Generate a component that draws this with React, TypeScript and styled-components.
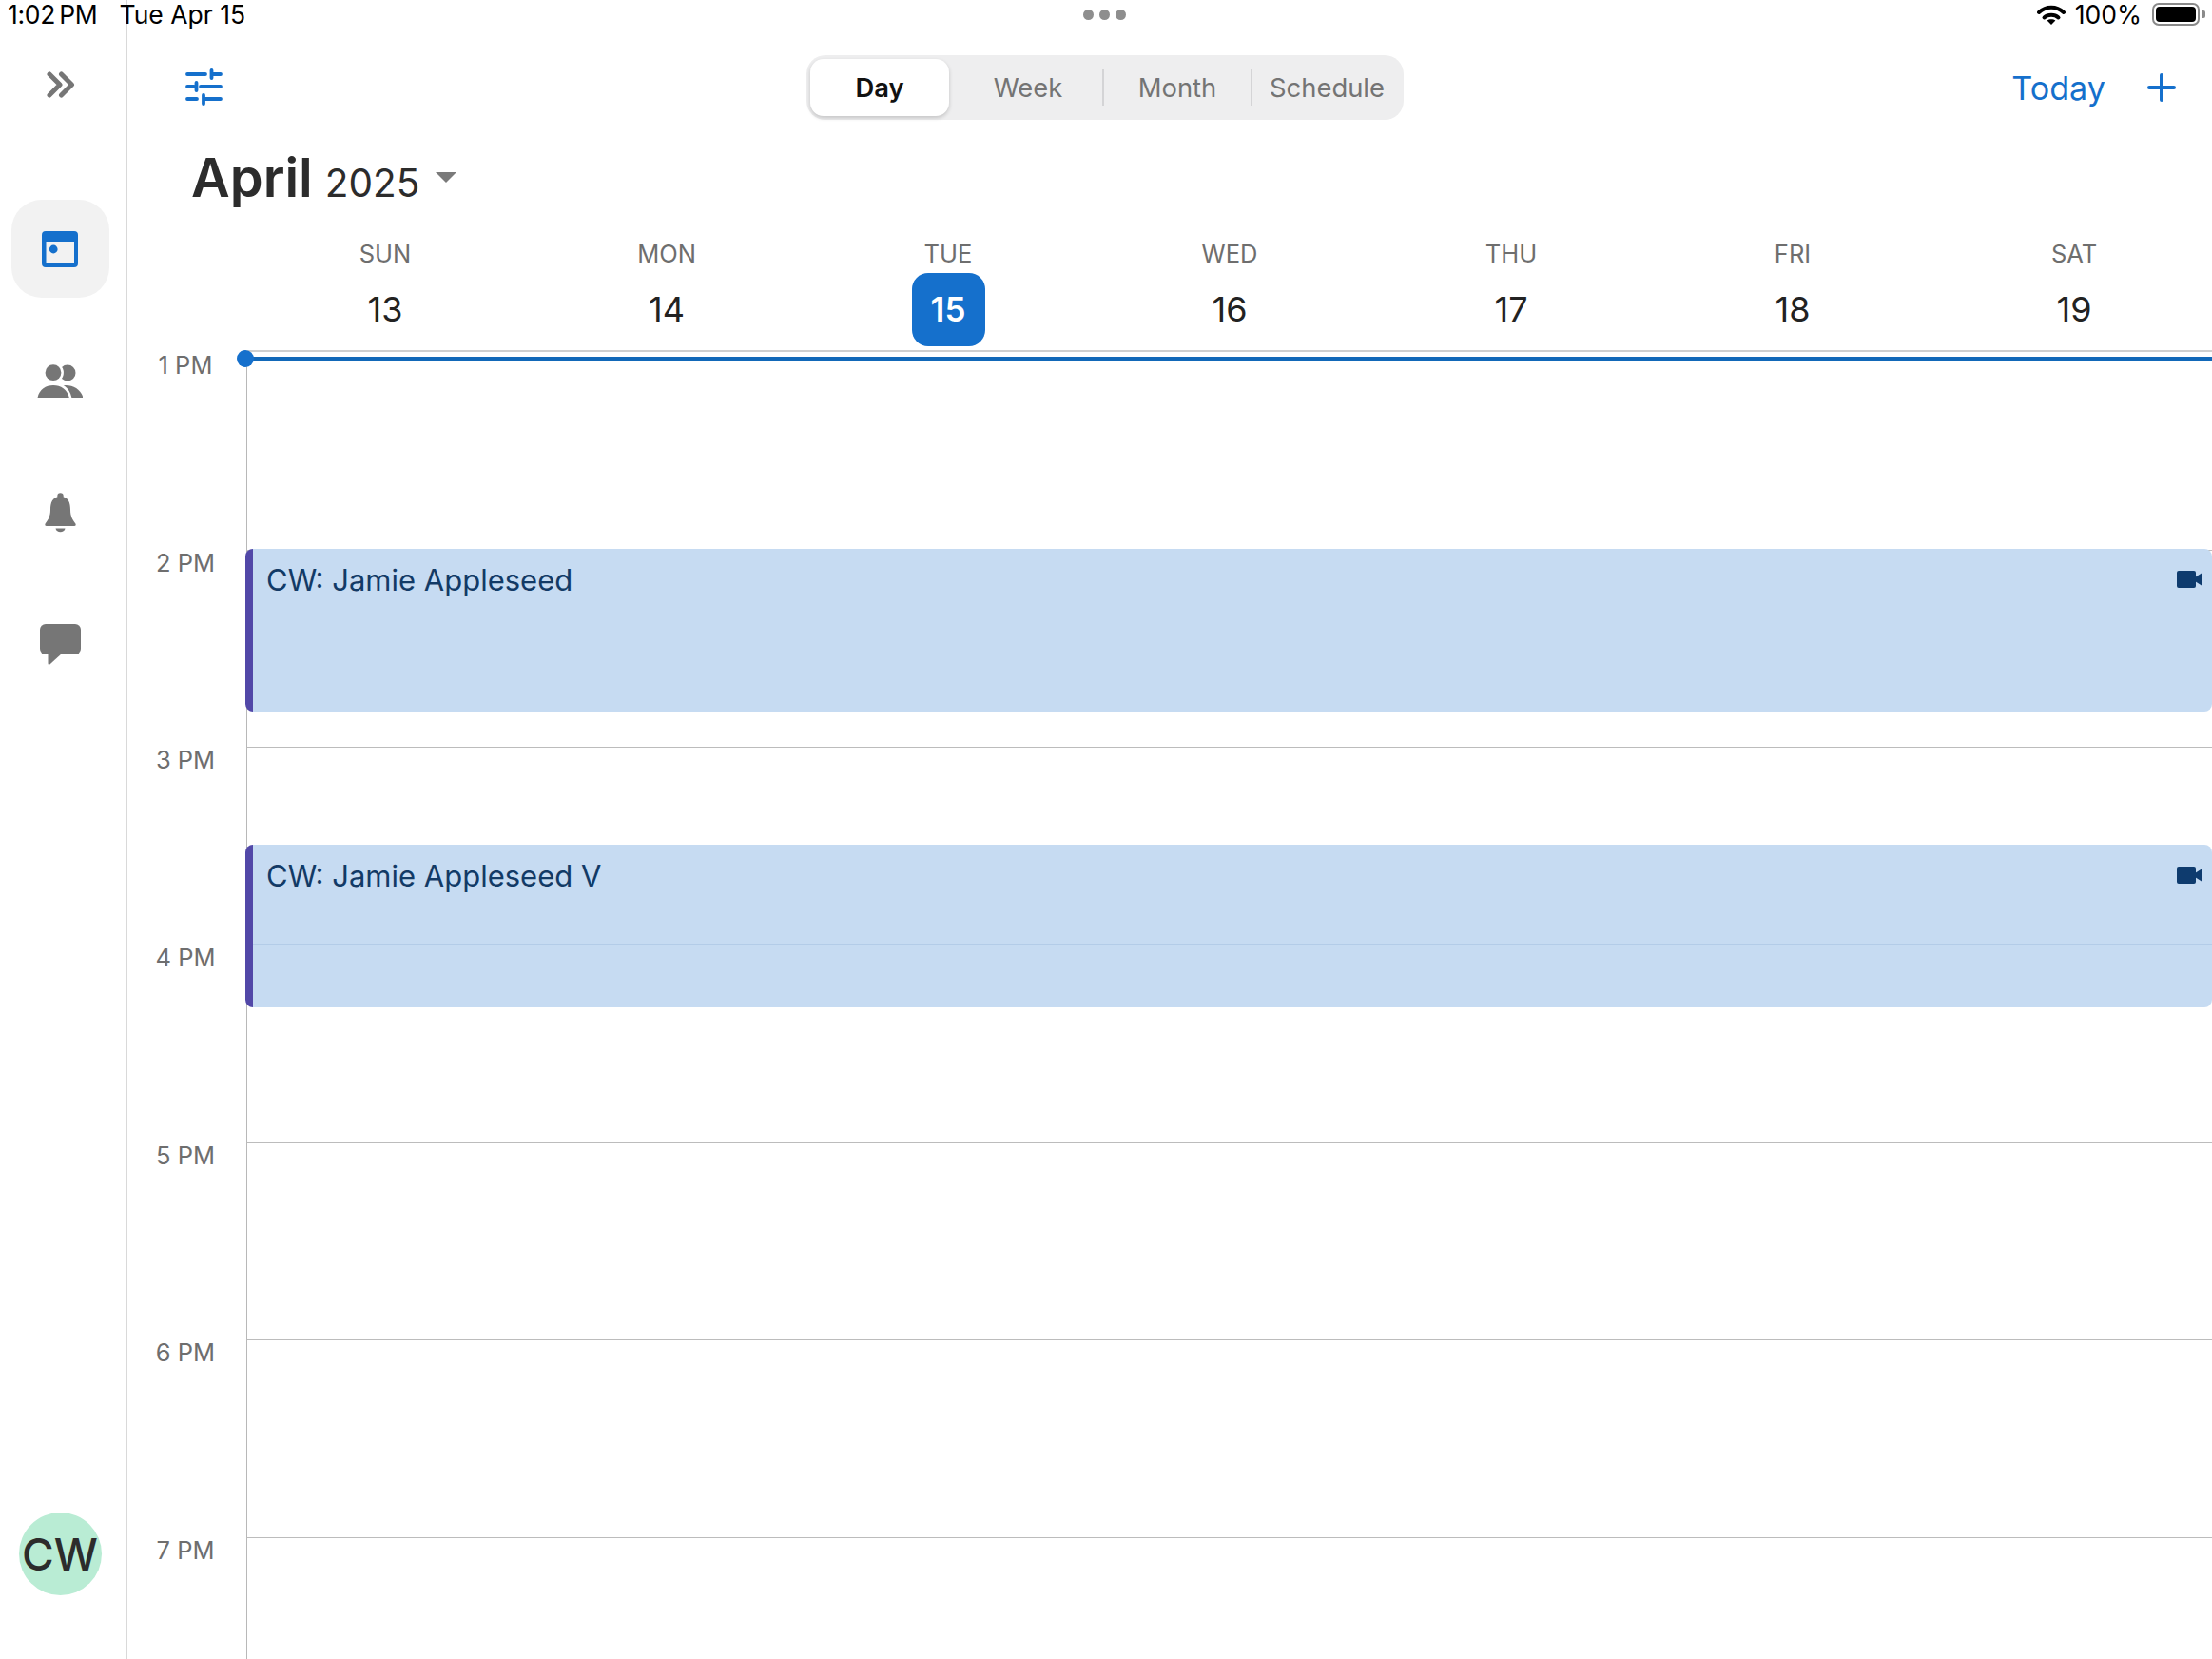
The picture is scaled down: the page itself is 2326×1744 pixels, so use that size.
import React from 'react';
import styled, { createGlobalStyle } from 'styled-components';

const BLUE = '#1570cc';
const GREY_ICON = '#767676';
const HOUR = 207.67;

const DAYS = [
  { label: 'SUN', date: 13 },
  { label: 'MON', date: 14 },
  { label: 'TUE', date: 15, today: true },
  { label: 'WED', date: 16 },
  { label: 'THU', date: 17 },
  { label: 'FRI', date: 18 },
  { label: 'SAT', date: 19 },
];

const HOURS = ['1 PM', '2 PM', '3 PM', '4 PM', '5 PM', '6 PM', '7 PM', ''];

const EVENTS = [
  { title: 'CW: Jamie Appleseed', top: 207 },
  { title: 'CW: Jamie Appleseed V', top: 518, hourLine: 104 },
];

export default function App() {
  return (
    <>
      <GlobalStyle />
      <Page>
        <StatusBar>
          <StatusGroup>
            <StatusTime>1:02 PM</StatusTime>
            <StatusDate>Tue Apr 15</StatusDate>
          </StatusGroup>
          <Multitask>
            <MultitaskDot />
            <MultitaskDot />
            <MultitaskDot />
          </Multitask>
          <StatusGroup>
            <svg width="30" height="21" viewBox="0 0 30 21" fill="none">
              <path d="M2 8C9.5 1 20.5 1 28 8" stroke="#000" strokeWidth="4" strokeLinecap="round" />
              <path d="M7.5 13.5C11.5 9.8 18.5 9.8 22.5 13.5" stroke="#000" strokeWidth="4" strokeLinecap="round" />
              <path d="M15 21L10.6 16.6C13 14.7 17 14.7 19.4 16.6Z" fill="#000" />
            </svg>
            <BatteryText>100%</BatteryText>
            <Battery>
              <BatteryFill />
            </Battery>
            <BatteryNub />
          </StatusGroup>
        </StatusBar>

        <Sidebar>
          <CollapseIcon viewBox="0 0 30 28" fill="none">
            <path d="M3 3L14 14L3 25M15.5 3L26.5 14L15.5 25" stroke={GREY_ICON} strokeWidth="5" strokeLinecap="round" strokeLinejoin="round" />
          </CollapseIcon>
          <NavList>
            <NavItem $active $nudge={1}>
              <svg width="38" height="38" viewBox="0 0 38 38">
                <path
                  fillRule="evenodd"
                  d="M4 0H34A4 4 0 0 1 38 4V34A4 4 0 0 1 34 38H4A4 4 0 0 1 0 34V4A4 4 0 0 1 4 0ZM4.5 11V33.5H34V11Z"
                  fill={BLUE}
                />
                <circle cx="12.2" cy="19" r="4.4" fill={BLUE} />
              </svg>
            </NavItem>
            <NavItem $nudge={2}>
              <svg width="48" height="35" viewBox="39 383 48 35">
                <circle cx="71" cy="392" r="8.5" fill={GREY_ICON} />
                <path d="M52 418C54 408 62 405 69 405C78 405 85 410 87.5 418Z" fill={GREY_ICON} />
                <circle cx="56" cy="391.7" r="8.4" fill={GREY_ICON} stroke="#fff" strokeWidth="5" paintOrder="stroke" />
                <path d="M39.5 418C41.5 409 48 405 56 405C64 405 70.5 409 72.8 418Z" fill={GREY_ICON} stroke="#fff" strokeWidth="5" paintOrder="stroke" />
                <rect x="39" y="418" width="48" height="3" fill="#fff" />
              </svg>
            </NavItem>
            <NavItem>
              <svg width="33" height="42" viewBox="0 0 33 42">
                <circle cx="16.5" cy="3.4" r="3.2" fill={GREY_ICON} />
                <path
                  d="M16.5 4C8 4 6 10.5 6 18C6 25 3.5 28.5 .6 32.5Q-.4 35 2 35H31Q33.4 35 32.4 32.5C29.5 28.5 27 25 27 18C27 10.5 25 4 16.5 4Z"
                  fill={GREY_ICON}
                />
                <path d="M11.5 37.5H21.5C20.8 42.5 12.2 42.5 11.5 37.5Z" fill={GREY_ICON} />
              </svg>
            </NavItem>
            <NavItem>
              <svg width="43" height="43" viewBox="0 0 43 43">
                <rect width="43" height="32" rx="6" fill={GREY_ICON} />
                <path d="M8.5 31V41.5Q8.8 43.5 10.6 42.2L23 31Z" fill={GREY_ICON} />
              </svg>
            </NavItem>
          </NavList>
          <Avatar>CW</Avatar>
        </Sidebar>

        <Main>
          <Toolbar>
            <FilterIcon viewBox="0 0 39 39" fill="none" stroke={BLUE} strokeWidth="3.8" strokeLinecap="round">
              <path d="M2 6H21M27.5 2V10M27.5 6H37" />
              <path d="M2 19H9M11.5 15V23M16 19H37" />
              <path d="M2 32H12M19 28V37M19 32H37" />
            </FilterIcon>
            <Segmented>
              <Tab $active>Day</Tab>
              <Tab $width={156}>Week</Tab>
              <TabDivider />
              <Tab $width={154}>Month</Tab>
              <TabDivider />
              <Tab $width={157}>Schedule</Tab>
            </Segmented>
            <ToolbarActions>
              <TodayButton>Today</TodayButton>
              <svg width="30" height="30" viewBox="0 0 30 30" fill="none" stroke={BLUE} strokeWidth="4" strokeLinecap="round">
                <path d="M15 2V28M2 15H28" />
              </svg>
            </ToolbarActions>
          </Toolbar>

          <TitleRow>
            <Month>April</Month>
            <Year>2025</Year>
            <Caret />
          </TitleRow>

          <WeekHeader>
            {DAYS.map((day) => (
              <DayColumn key={day.label}>
                <DayLabel>{day.label}</DayLabel>
                <DayDate $today={day.today}>{day.date}</DayDate>
              </DayColumn>
            ))}
          </WeekHeader>

          <Schedule>
            {HOURS.map((hour, i) => (
              <HourRow key={i}>
                <HourLabel>{hour}</HourLabel>
                <HourSlot $first={i === 0} />
              </HourRow>
            ))}

            <NowLine>
              <NowDot />
            </NowLine>

            {EVENTS.map((event) => (
              <EventCard key={event.title} $top={event.top}>
                <EventTitle>{event.title}</EventTitle>
                <VideoIcon viewBox="0 0 26 18">
                  <rect width="20" height="18" rx="2" fill="#0e3b6e" />
                  <path d="M19 7L26 2.5V15.5L19 11Z" fill="#0e3b6e" />
                </VideoIcon>
                {event.hourLine && <EventHourLine $top={event.hourLine} />}
              </EventCard>
            ))}
          </Schedule>
        </Main>
      </Page>
    </>
  );
}

const GlobalStyle = createGlobalStyle`
  html, body {
    margin: 0;
    padding: 0;
    background: #fff;
  }

  * {
    box-sizing: border-box;
  }

  body {
    font-family: Inter, "Liberation Sans", sans-serif;
  }
`;

const Page = styled.div`
  position: relative;
  display: flex;
  width: 2326px;
  height: 1744px;
  overflow: hidden;
  background: #fff;
`;

const StatusBar = styled.div`
  position: absolute;
  top: 0;
  left: 0;
  right: 0;
  height: 30px;
  padding: 0 7px 0 8px;
  display: flex;
  justify-content: space-between;
  align-items: center;
  z-index: 2;
`;

const StatusGroup = styled.div`
  display: flex;
  align-items: center;
`;

const StatusText = styled.span`
  font-size: 26.5px;
  color: #000;
  line-height: 30px;
`;

const StatusTime = styled(StatusText)`
  letter-spacing: -0.3px;
  word-spacing: -3px;
`;

const StatusDate = styled(StatusText)`
  margin-left: 23px;
`;

const BatteryText = styled(StatusText)`
  margin-left: 10px;
`;

const Multitask = styled.div`
  position: absolute;
  left: 1139px;
  top: 10px;
  display: flex;
  gap: 6px;
`;

const MultitaskDot = styled.span`
  width: 11px;
  height: 11px;
  border-radius: 50%;
  background: #8e8e8e;
`;

const Battery = styled.div`
  width: 50px;
  height: 24px;
  margin-left: 11px;
  padding: 2px;
  border: 2px solid #8a8a8a;
  border-radius: 7px;
`;

const BatteryFill = styled.div`
  width: 100%;
  height: 100%;
  background: #000;
  border-radius: 4px;
`;

const BatteryNub = styled.div`
  width: 3px;
  height: 8px;
  margin-left: 3px;
  background: #8a8a8a;
  border-radius: 0 2px 2px 0;
`;

const Sidebar = styled.aside`
  width: 134px;
  flex-shrink: 0;
  height: 100%;
  padding: 75px 17px 67px 12px;
  display: flex;
  flex-direction: column;
  align-items: center;
  border-right: 2px solid #d9d9d9;
`;

const CollapseIcon = styled.svg`
  width: 30px;
  height: 28px;
  flex-shrink: 0;
`;

const NavList = styled.nav`
  margin-top: 107px;
  display: flex;
  flex-direction: column;
  gap: 35.5px;
`;

const NavItem = styled.div<{ $active?: boolean; $nudge?: number }>`
  width: 103px;
  height: 103px;
  padding-right: ${(p) => p.$nudge ?? 0}px;
  border-radius: 32px;
  display: flex;
  align-items: center;
  justify-content: center;
  background: ${(p) => (p.$active ? '#f2f2f2' : 'transparent')};
`;

const Avatar = styled.div`
  margin-top: auto;
  margin-left: -1px;
  width: 87px;
  height: 87px;
  flex-shrink: 0;
  border-radius: 50%;
  background: #b9ecd4;
  display: flex;
  align-items: center;
  justify-content: center;
  font-size: 46px;
  font-weight: 500;
  color: #2c2c2c;
`;

const Main = styled.main`
  flex: 1;
  min-width: 0;
  height: 100%;
  display: flex;
  flex-direction: column;
`;

const Toolbar = styled.div`
  height: 126px;
  padding: 58px 38px 0 61px;
  display: flex;
  align-items: center;
`;

const FilterIcon = styled.svg`
  width: 39px;
  height: 39px;
  margin-top: -2px;
`;

const Segmented = styled.div`
  margin-left: 614px;
  width: 628px;
  height: 68px;
  padding: 0 2px 0 4px;
  display: flex;
  align-items: center;
  background: #eeeeef;
  border-radius: 20px;
`;

const Tab = styled.div<{ $active?: boolean; $width?: number }>`
  width: ${(p) => (p.$active ? 146 : p.$width)}px;
  height: 60px;
  flex-shrink: 0;
  margin-right: ${(p) => (p.$active ? 5 : 0)}px;
  display: flex;
  align-items: center;
  justify-content: center;
  font-size: 27.4px;
  font-weight: ${(p) => (p.$active ? 600 : 400)};
  color: ${(p) => (p.$active ? '#111' : '#747474')};
  background: ${(p) => (p.$active ? '#fff' : 'transparent')};
  border-radius: 14px;
  box-shadow: ${(p) => (p.$active ? '0 2px 4px rgba(0, 0, 0, 0.18)' : 'none')};
`;

const TabDivider = styled.div`
  width: 2px;
  height: 38px;
  flex-shrink: 0;
  background: #d4d4d6;
`;

const ToolbarActions = styled.div`
  margin-left: auto;
  display: flex;
  align-items: center;
  gap: 44px;
`;

const TodayButton = styled.span`
  font-size: 34.2px;
  color: ${BLUE};
`;

const TitleRow = styled.div`
  padding: 29px 0 0 67px;
  height: 100px;
  display: flex;
  align-items: baseline;
`;

const Month = styled.span`
  font-size: 56px;
  font-weight: 600;
  color: #2c2c2c;
  line-height: 64px;
`;

const Year = styled.span`
  margin-left: 13px;
  font-size: 40.5px;
  color: #2c2c2c;
`;

const Caret = styled.span`
  margin-left: 17px;
  align-self: flex-start;
  margin-top: 26px;
  width: 0;
  height: 0;
  border-left: 11px solid transparent;
  border-right: 11px solid transparent;
  border-top: 11px solid #7a7a7a;
`;

const WeekHeader = styled.div`
  margin-left: 123px;
  height: 144px;
  padding-top: 26px;
  display: grid;
  grid-template-columns: repeat(7, 296px);
  border-bottom: 2px solid #cfcfcf;
`;

const DayColumn = styled.div`
  display: flex;
  flex-direction: column;
  align-items: center;
`;

const DayLabel = styled.div`
  height: 35px;
  line-height: 30px;
  font-size: 25.5px;
  color: #6e6e6e;
`;

const DayDate = styled.div<{ $today?: boolean }>`
  width: 77px;
  height: 77px;
  padding-bottom: 2px;
  border-radius: 17px;
  display: flex;
  align-items: center;
  justify-content: center;
  font-size: ${(p) => (p.$today ? 35 : 36)}px;
  font-weight: ${(p) => (p.$today ? 600 : 400)};
  color: ${(p) => (p.$today ? '#fff' : '#222')};
  background: ${(p) => (p.$today ? BLUE : 'transparent')};
`;

const Schedule = styled.div`
  position: relative;
  flex: 1;
  min-height: 0;
`;

const HourRow = styled.div`
  display: flex;
  height: ${HOUR}px;
`;

const HourLabel = styled.div`
  width: 125px;
  padding-right: 3px;
  height: 29px;
  line-height: 28px;
  text-align: center;
  font-size: 25.5px;
  color: #6e6e6e;
`;

const HourSlot = styled.div<{ $first?: boolean }>`
  flex: 1;
  border-left: 1px solid #b8b8b8;
  border-top: ${(p) => (p.$first ? 'none' : '1px solid #bcbcbc')};
`;

const NowLine = styled.div`
  position: absolute;
  top: 5px;
  left: 124px;
  right: 0;
  height: 4px;
  background: #1268b8;
`;

const NowDot = styled.span`
  position: absolute;
  left: -9px;
  top: -7px;
  width: 18px;
  height: 18px;
  border-radius: 50%;
  background: ${BLUE};
`;

const EventCard = styled.div<{ $top: number }>`
  position: absolute;
  top: ${(p) => p.$top}px;
  left: 124px;
  right: 0;
  height: 171px;
  padding: 12px 11px 0 14px;
  display: flex;
  justify-content: space-between;
  align-items: flex-start;
  background: #c6dbf2;
  border-left: 8px solid #5248a8;
  border-radius: 8px;
`;

const EventHourLine = styled.div<{ $top: number }>`
  position: absolute;
  top: ${(p) => p.$top}px;
  left: 0;
  right: 0;
  height: 1px;
  background: #b3cce8;
`;

const EventTitle = styled.span`
  font-size: 31px;
  line-height: 41px;
  color: #123a66;
`;

const VideoIcon = styled.svg`
  width: 26px;
  height: 18px;
  margin-top: 11px;
`;
